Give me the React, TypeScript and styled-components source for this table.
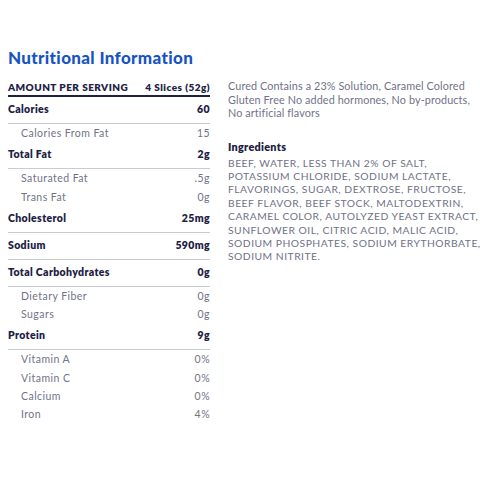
import React from "react";
import styled, { createGlobalStyle } from "styled-components";

const Global = createGlobalStyle`
  html, body { margin: 0; padding: 0; background: #fff; }
  body { font-family: "Lato", "Open Sans", sans-serif; }
`;

const Page = styled.div`
  padding: 48px 0 0 8px;
  width: 480px;
  box-sizing: border-box;
`;

const Title = styled.h1`
  margin: 0 0 11px;
  font-size: 17px;
  line-height: 20px;
  font-weight: 900;
  color: #1754c2;
  letter-spacing: 0.35px;
`;

const Columns = styled.div`
  display: flex;
  align-items: flex-start;
  gap: 18px;
`;

const Table = styled.div`
  width: 202px;
  flex: none;
  display: flex;
  flex-direction: column;
  padding-top: 2px;
`;

const HeaderRow = styled.div`
  display: flex;
  justify-content: space-between;
  font-size: 10px;
  line-height: 12px;
  font-weight: 800;
  letter-spacing: 0.45px;
  color: #1d2245;
  padding-bottom: 2px;
  border-bottom: 2px solid #1d2245;
`;

const MainRow = styled.div`
  display: flex;
  justify-content: space-between;
  font-size: 10.5px;
  line-height: 14px;
  font-weight: 800;
  letter-spacing: 0.35px;
  color: #1d2245;
  padding: 5px 0 7px;
  border-bottom: 1px solid #c9cad2;
`;

const SubRow = styled.div`
  display: flex;
  justify-content: space-between;
  font-size: 10.5px;
  line-height: 18.3px;
  letter-spacing: 0.45px;
  color: #707387;
  padding-left: 13px;
`;

const Side = styled.div`
  flex: 1;
  color: #6f7287;
  font-size: 10.8px;
  line-height: 13.5px;
  white-space: nowrap;
`;

const Para = styled.p`
  margin: 0 0 20px;
  letter-spacing: 0.12px;
`;

const Heading = styled.h2`
  margin: 0 0 3.5px;
  font-size: 10.8px;
  line-height: 13.5px;
  font-weight: 800;
  letter-spacing: 0.3px;
  color: #1d2245;
`;

const Ingredients = styled.p`
  margin: 0;
  font-size: 10.3px;
  line-height: 13.4px;
  letter-spacing: 0.5px;
`;

type Row = { kind: "main" | "sub"; label: string; value: string };

const rows: Row[] = [
  { kind: "main", label: "Calories", value: "60" },
  { kind: "sub", label: "Calories From Fat", value: "15" },
  { kind: "main", label: "Total Fat", value: "2g" },
  { kind: "sub", label: "Saturated Fat", value: ".5g" },
  { kind: "sub", label: "Trans Fat", value: "0g" },
  { kind: "main", label: "Cholesterol", value: "25mg" },
  { kind: "main", label: "Sodium", value: "590mg" },
  { kind: "main", label: "Total Carbohydrates", value: "0g" },
  { kind: "sub", label: "Dietary Fiber", value: "0g" },
  { kind: "sub", label: "Sugars", value: "0g" },
  { kind: "main", label: "Protein", value: "9g" },
  { kind: "sub", label: "Vitamin A", value: "0%" },
  { kind: "sub", label: "Vitamin C", value: "0%" },
  { kind: "sub", label: "Calcium", value: "0%" },
  { kind: "sub", label: "Iron", value: "4%" },
];

const paraLines = [
  "Cured Contains a 23% Solution, Caramel Colored",
  "Gluten Free No added hormones, No by-products,",
  "No artificial flavors",
];

const ingredientLines = [
  "BEEF, WATER, LESS THAN 2% OF SALT,",
  "POTASSIUM CHLORIDE, SODIUM LACTATE,",
  "FLAVORINGS, SUGAR, DEXTROSE, FRUCTOSE,",
  "BEEF FLAVOR, BEEF STOCK, MALTODEXTRIN,",
  "CARAMEL COLOR, AUTOLYZED YEAST EXTRACT,",
  "SUNFLOWER OIL, CITRIC ACID, MALIC ACID,",
  "SODIUM PHOSPHATES, SODIUM ERYTHORBATE,",
  "SODIUM NITRITE.",
];

const withBreaks = (lines: string[]) =>
  lines.map((l, i) => (
    <React.Fragment key={i}>
      {l}
      {i < lines.length - 1 && <br />}
    </React.Fragment>
  ));

export default function App() {
  return (
    <>
      <Global />
      <Page>
        <Title>Nutritional Information</Title>
        <Columns>
          <Table>
            <HeaderRow>
              <span>AMOUNT PER SERVING</span>
              <span>4 Slices (52g)</span>
            </HeaderRow>
            {rows.map((r) =>
              r.kind === "main" ? (
                <MainRow key={r.label}>
                  <span>{r.label}</span>
                  <span>{r.value}</span>
                </MainRow>
              ) : (
                <SubRow key={r.label}>
                  <span>{r.label}</span>
                  <span>{r.value}</span>
                </SubRow>
              )
            )}
          </Table>
          <Side>
            <Para>{withBreaks(paraLines)}</Para>
            <Heading>Ingredients</Heading>
            <Ingredients>{withBreaks(ingredientLines)}</Ingredients>
          </Side>
        </Columns>
      </Page>
    </>
  );
}
